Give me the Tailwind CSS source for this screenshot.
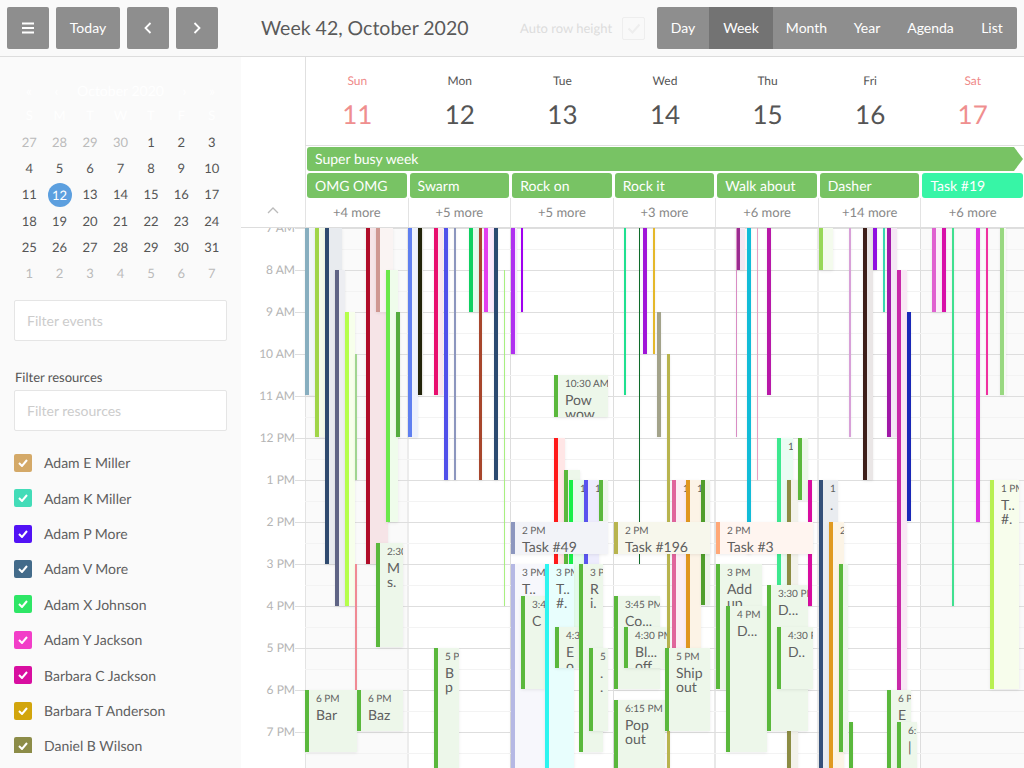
<!DOCTYPE html>
<html lang="en">
<head>
    <meta charset="UTF-8">
    <title>Week 42, October 2020</title>
    <script src="https://cdn.jsdelivr.net/npm/@tailwindcss/browser@4"></script>
</head>
<body class="w-[1024px] h-[768px] overflow-hidden bg-white font-['Lato',sans-serif] text-[#555] [text-rendering:geometricPrecision]">

<!-- toolbar -->
<header class="h-[57px] border-b border-[#ddd] bg-[#f9f9f9] flex items-center pl-[7px] pr-[7px]">
    <button class="w-[42px] h-[42px] shrink-0 rounded-[2px] bg-[#8e8e8e] flex items-center justify-center">
        <svg width="14" height="12" viewBox="0 0 14 12" stroke="#fff" stroke-width="2" fill="none"><path d="M1 1.5h12M1 6h12M1 10.5h12"/></svg>
    </button>
    <button class="ml-[7px] w-[64px] h-[42px] pb-[2px] shrink-0 rounded-[2px] bg-[#8e8e8e] text-white text-[14px]">Today</button>
    <button class="ml-[7px] w-[42px] h-[42px] shrink-0 rounded-[2px] bg-[#8e8e8e] flex items-center justify-center">
        <svg width="8" height="12" viewBox="0 0 8 12" stroke="#fff" stroke-width="1.8" fill="none"><path d="M6.5 1L1.5 6l5 5"/></svg>
    </button>
    <button class="ml-[7px] w-[42px] h-[42px] shrink-0 rounded-[2px] bg-[#8e8e8e] flex items-center justify-center">
        <svg width="8" height="12" viewBox="0 0 8 12" stroke="#fff" stroke-width="1.8" fill="none"><path d="M1.5 1l5 5-5 5"/></svg>
    </button>
    <h1 class="ml-[43px] w-[208px] pt-[1px] shrink-0 text-[19.5px] text-[#5a5a5a] whitespace-nowrap">Week 42, October 2020</h1>
    <span class="ml-[51px] w-[90px] pt-[1px] shrink-0 text-[13px] text-[#ddd] whitespace-nowrap">Auto row height</span>
    <span class="ml-[12px] w-[23px] h-[23px] shrink-0 rounded-[2px] border border-[#eee] flex items-center justify-center">
        <svg width="14" height="11" viewBox="0 0 14 11" stroke="#eee" stroke-width="2" fill="none"><path d="M1.5 5.5l4 4 7-8"/></svg>
    </span>
    <nav class="ml-auto h-[42px] w-[360px] shrink-0 rounded-[2px] bg-[#8e8e8e] flex text-white text-[14px]">
        <button class="w-[52px] pb-[2px]">Day</button>
        <button class="w-[64px] pb-[2px] bg-[#737373]">Week</button>
        <button class="w-[67px] pb-[2px]">Month</button>
        <button class="w-[54px] pb-[2px]">Year</button>
        <button class="w-[73px] pb-[2px]">Agenda</button>
        <button class="w-[50px] pb-[2px]">List</button>
    </nav>
</header>

<div class="flex h-[711px]">
    <!-- sidebar -->
    <div class="w-[241px] shrink-0 bg-[#fafafa]">
    <aside class="px-[14px] flex flex-col h-[696px] overflow-hidden">
        <div class="w-[213px] h-[32px] shrink-0 mt-[17px] flex items-center text-white text-[14px]">
            <span class="w-[30px] text-center">«</span>
            <span class="w-[25px] text-center">‹</span>
            <span class="flex-1 text-center">October 2020</span>
            <span class="w-[25px] text-center">›</span>
            <span class="w-[30px] text-center">»</span>
        </div>
        <div id="mini" class="grid grid-cols-7 w-[213px] shrink-0 text-[13px] auto-rows-[26.3px] items-center text-center mt-[-3px]"></div>
        <input placeholder="Filter events" class="mt-[13px] w-[213px] h-[41px] shrink-0 bg-white border border-[#e5e5e5] rounded-[2px] px-[12px] text-[14px] placeholder-[#ccc]">
        <label class="mt-[28px] ml-[1px] shrink-0 text-[13px] leading-[16px] text-[#555]">Filter resources</label>
        <input placeholder="Filter resources" class="mt-[5px] w-[213px] h-[41px] shrink-0 bg-white border border-[#e5e5e5] rounded-[2px] px-[12px] text-[14px] placeholder-[#ccc]">
        <ul id="resources" class="mt-[14px] shrink-0 flex flex-col text-[14px] text-[#5f5f5f]"></ul>
    </aside>
    </div>

    <main class="flex-1 min-w-0 flex flex-col">
        <!-- day header -->
        <div class="flex h-[89px] shrink-0">
            <div class="w-[64px] shrink-0"></div>
            <div class="flex-1 border-l border-b border-[#e0e0e0] grid grid-cols-7 text-center">
                <div class="pt-[16px]"><div class="text-[12px] leading-[16px] text-[#ef8a8a]">Sun</div><div class="text-[26px] leading-[32px] mt-[9px] text-[#ef8f8f]">11</div></div>
                <div class="pt-[16px]"><div class="text-[12px] leading-[16px]">Mon</div><div class="text-[26px] leading-[32px] mt-[9px]">12</div></div>
                <div class="pt-[16px]"><div class="text-[12px] leading-[16px]">Tue</div><div class="text-[26px] leading-[32px] mt-[9px]">13</div></div>
                <div class="pt-[16px]"><div class="text-[12px] leading-[16px]">Wed</div><div class="text-[26px] leading-[32px] mt-[9px]">14</div></div>
                <div class="pt-[16px]"><div class="text-[12px] leading-[16px]">Thu</div><div class="text-[26px] leading-[32px] mt-[9px]">15</div></div>
                <div class="pt-[16px]"><div class="text-[12px] leading-[16px]">Fri</div><div class="text-[26px] leading-[32px] mt-[9px]">16</div></div>
                <div class="pt-[16px]"><div class="text-[12px] leading-[16px] text-[#ef8a8a]">Sat</div><div class="text-[26px] leading-[32px] mt-[9px] text-[#ef8f8f]">17</div></div>
            </div>
        </div>

        <!-- all day rows -->
        <div class="flex h-[82px] border-b border-[#ddd] shrink-0">
            <div class="w-[64px] shrink-0 relative">
                <svg class="absolute left-[26px] top-[61px]" width="12" height="7" viewBox="0 0 12 7" stroke="#bbb" stroke-width="1.3" fill="none"><path d="M1 6l5-5 5 5"/></svg>
            </div>
            <div class="flex-1 border-l border-[#e3e3e3] flex flex-col">
                <div class="h-[25px] pt-[1px] pl-[1px]">
                    <div class="w-[716px] h-[24px] rounded-l-[3px] bg-[#78c364] text-white text-[14px] leading-[24px] pl-[8px] [clip-path:polygon(0_0,707px_0,100%_50%,707px_100%,0_100%)]">Super busy week</div>
                </div>
                <div class="grid grid-cols-7 h-[27px] pt-[2px]">
                    <div class="ml-[1px] mr-[2px] rounded-[3px] bg-[#78c364] text-white text-[14px] leading-[25px] pl-[8px]">OMG OMG</div>
                    <div class="ml-[1px] mr-[2px] rounded-[3px] bg-[#78c364] text-white text-[14px] leading-[25px] pl-[8px]">Swarm</div>
                    <div class="ml-[1px] mr-[2px] rounded-[3px] bg-[#78c364] text-white text-[14px] leading-[25px] pl-[8px]">Rock on</div>
                    <div class="ml-[1px] mr-[2px] rounded-[3px] bg-[#78c364] text-white text-[14px] leading-[25px] pl-[8px]">Rock it</div>
                    <div class="ml-[1px] mr-[2px] rounded-[3px] bg-[#78c364] text-white text-[14px] leading-[25px] pl-[8px]">Walk about</div>
                    <div class="ml-[1px] mr-[2px] rounded-[3px] bg-[#78c364] text-white text-[14px] leading-[25px] pl-[8px]">Dasher</div>
                    <div class="ml-[1px] mr-[1px] rounded-[3px] bg-[#37f5a6] text-white text-[14px] leading-[25px] pl-[8px]">Task #19</div>
                </div>
                <div class="grid grid-cols-7 flex-1 text-center text-[13px] leading-[29px] text-[#888]">
                    <div class="border-r border-[#e3e3e3]">+4 more</div>
                    <div class="border-r border-[#e3e3e3]">+5 more</div>
                    <div class="border-r border-[#e3e3e3]">+5 more</div>
                    <div class="border-r border-[#e3e3e3]">+3 more</div>
                    <div class="border-r border-[#e3e3e3]">+6 more</div>
                    <div class="border-r border-[#e3e3e3]">+14 more</div>
                    <div>+6 more</div>
                </div>
            </div>
        </div>

        <!-- time grid -->
        <div class="flex-1 min-h-0 relative overflow-hidden flex">
            <div id="labels" class="w-[64px] shrink-0 relative"></div>
            <div class="flex-1 grid grid-cols-7 border-l border-[#e3e3e3]">
                <div class="bg-[#fafafa] border-r-2 border-[#ececec]"></div>
                <div class="border-r border-[#ddd]"></div>
                <div class="border-r border-[#ddd]"></div>
                <div class="border-r-2 border-[#e8e8e8]"></div>
                <div class="border-r-2 border-[#ececec]"></div>
                <div class="border-r border-[#ddd]"></div>
                <div class="bg-[#fafafa]"></div>
            </div>
            <div id="lines" class="absolute inset-0"></div>
            <div id="events" class="absolute inset-0"></div>
        </div>
    </main>
</div>

<script>
    // mini calendar
    const mini = document.getElementById('mini');
    'SMTWTFS'.split('').forEach(d => {
        mini.insertAdjacentHTML('beforeend', `<div class="text-white">${d}</div>`);
    });
    const days = [27,28,29,30,1,2,3,4,5,6,7,8,9,10,11,12,13,14,15,16,17,18,19,20,21,22,23,24,25,26,27,28,29,30,31,1,2,3,4,5,6,7];
    days.forEach((d, i) => {
        const muted = i < 4 || i > 34;
        if (d === 12) {
            mini.insertAdjacentHTML('beforeend', `<div class="flex justify-center"><span class="w-[24px] h-[24px] rounded-full bg-[#5c9fdf] text-white leading-[24px]">12</span></div>`);
        } else {
            mini.insertAdjacentHTML('beforeend', `<div class="${muted ? 'text-[#bbb]' : 'text-[#555]'}">${d}</div>`);
        }
    });

    // resource filter list
    const resources = [
        ['Adam E Miller', '#d4a968'], ['Adam K Miller', '#43dcb8'], ['Adam P More', '#5212f5'],
        ['Adam V More', '#436b8a'], ['Adam X Johnson', '#2ee666'], ['Adam Y Jackson', '#f23ec8'],
        ['Barbara C Jackson', '#d80ea0'], ['Barbara T Anderson', '#d2a50c'], ['Daniel B Wilson', '#8c8c48']
    ];
    const list = document.getElementById('resources');
    resources.forEach(([name, color]) => {
        list.insertAdjacentHTML('beforeend', `<li class="h-[35.4px] shrink-0 flex items-center">
            <span class="w-[18px] h-[18px] rounded-[2px] flex items-center justify-center" style="background:${color}">
                <svg width="10" height="8" viewBox="0 0 10 8" stroke="#fff" stroke-width="2" fill="none"><path d="M1 4l3 3 5-6"/></svg>
            </span>
            <span class="ml-[12px] whitespace-nowrap">${name}</span>
        </li>`);
    });

    // hour lines and labels
    const hours = ['7 AM','8 AM','9 AM','10 AM','11 AM','12 PM','1 PM','2 PM','3 PM','4 PM','5 PM','6 PM','7 PM'];
    const labels = document.getElementById('labels');
    const lines = document.getElementById('lines');
    hours.forEach((h, i) => {
        labels.insertAdjacentHTML('beforeend', `<div class="absolute right-[10px] h-[16px] leading-[16px] text-[12px] text-[#b4b4b4] whitespace-nowrap" style="top:${i * 42 - 8}px">${h}</div>`);
        lines.insertAdjacentHTML('beforeend', `<div class="absolute left-[54px] right-0 h-px bg-[#dedede]" style="top:${i * 42}px"></div>`);
        lines.insertAdjacentHTML('beforeend', `<div class="absolute left-[64px] right-0 h-px bg-[#f3f3f3]" style="top:${i * 42 + 21}px"></div>`);
    });

    // events: page x, right edge, top y, bottom y, colour, bar width, time, label
    const G = '#5ab83c';
    const B = 768;
    const T = 228;
    const events = [
        [305,315,T,395,'#87aebf',4], [315,325,T,437,'#a0d548',4], [325,342,T,564,'#2f4a6f',4],
        [335,345,270,606,'#5f6485',4], [345,355,312,606,'#b5ff4c',4], [355,357,354,480,'#a0d590',2],
        [366,388,T,564,'#b00c28',4], [376,393,T,312,'#cf9791',4], [386,398,270,522,'#6be84a',4],
        [396,400,312,437,'#55ab3f',4], [355,357,564,690,'#f08a94',2],
        [376,403,543,647,G,4,'2:30 PM','M<br>s.'],
        [305,357,690,752,G,4,'6 PM','Bar'], [357,403,690,731,G,4,'6 PM','Baz'],

        [408,418,T,437,'#5f7ff0',4], [418,423,T,395,'#23240a',4], [434,443,T,395,'#e80f6e',4],
        [444,449,T,480,'#5050ea',4], [454,456,T,480,'#8c96be',2], [469,479,T,312,'#0ed060',4],
        [479,482,T,480,'#a8462c',3], [484,494,T,312,'#e33df0',4], [494,498,T,480,'#2b4a70',4],
        [504,505,270,606,'#a8f080',1], [434,459,648,B,G,4,'5 PM','B<br>p'],

        [511,517,T,354,'#b030f0',4], [521,523,T,312,'#a000f0',2],
        [554,608,375,417,G,4,'10:30 AM','Pow<br>wow'],
        [554,565,438,564,'#ff1a1a',4], [564,580,470,564,G,4], [569,584,480,627,'#17f048',4,'1'],
        [584,599,480,564,'#5a55ee',4,'1'], [599,608,480,521,G,4],
        [511,608,522,554,'#8c96be',4,'2 PM','Task #49'],
        [511,545,564,B,'#b5b8e4',4,'3 PM','T..<br>k'],
        [521,545,596,689,G,4,'3:45 PM','C'],
        [545,574,564,B,'#2df5f0',4,'3 PM','T..<br>#.'],
        [555,579,627,668,G,4,'4:30 PM','E<br>o'],
        [579,603,564,752,G,4,'3 PM','R<br>i.'],
        [589,608,648,731,G,4,'5 PM','.<br>.'],

        [624,626,T,395,'#20e090',2], [639,640,T,564,'#0f6b2a',1], [643,647,T,354,'#a015d8',4],
        [653,655,T,354,'#e5b82a',2], [657,661,312,437,'#a3a38a',4], [667,670,354,B,'#b8b44e',3],
        [672,686,480,648,'#e0659c',4,'1'], [686,701,480,648,'#e09620',4,'1'], [701,710,480,605,'#4f9e2c',4],
        [614,710,522,554,'#b8b44e',4,'2 PM','Task #196'],
        [614,660,596,689,G,4,'3:45 PM','Co...'],
        [624,667,627,668,G,4,'4:30 PM','Bl...<br>off'],
        [614,665,700,B,G,4,'6:15 PM','Pop<br>out'],
        [665,710,648,731,G,4,'5 PM','Ship<br>out'],

        [736,745,T,270,'#9c2d92',4], [736,737,T,437,'#d98cc4',1], [747,751,T,554,'#12bcd8',4],
        [757,758,T,480,'#e8a0c4',1], [767,771,T,395,'#b818a8',4],
        [777,793,438,585,'#3de88f',4,'1'], [787,798,480,B,'#8c8c44',4], [798,808,438,500,G,4],
        [808,812,480,606,'#d80ca0',4],
        [716,813,522,554,'#ffa878',4,'2 PM','Task #3'],
        [716,762,564,689,G,4,'3 PM','Add<br>up'],
        [726,767,606,752,G,4,'4 PM','D...'],
        [767,808,585,731,G,4,'3:30 PM','D...'],
        [777,813,627,689,G,4,'4:30 PM','D..'],

        [819,833,T,270,'#98d858',4], [849,851,T,437,'#d8a0d8',2], [863,873,T,480,'#3e1f1a',4],
        [873,877,T,270,'#9010e0',4], [883,885,T,312,'#38d8b0',2], [887,897,T,437,'#a018a8',4],
        [897,907,270,690,'#c828a8',4], [907,911,312,521,'#1a28b8',4],
        [819,838,480,B,'#34507a',4,'1','.'], [829,844,522,B,'#e09a20',4,'2'],
        [839,848,564,752,G,4], [849,853,722,B,G,4],
        [887,911,690,B,G,4,'6 PM','E'], [897,917,722,B,G,4,'6:15','|'],

        [932,942,T,312,'#e060d0',4], [942,946,T,312,'#d810a8',4], [952,954,T,606,'#40e090',2],
        [976,980,T,522,'#e030e0',4], [986,988,T,395,'#f030a0',2], [1000,1006,T,395,'#98d880',4],
        [990,1019,480,689,'#b8f050',4,'1 PM','T..<br>#.']
    ];

    function tint(hex) {
        const v = [1, 3, 5].map(i => parseInt(hex.slice(i, i + 2), 16));
        return `rgb(${v.map(c => Math.round(255 - (255 - c) * 0.11)).join(',')})`;
    }

    const holder = document.getElementById('events');
    events.forEach(([x, right, top, bottom, color, bar, time, label]) => {
        let text = '';
        if (time) text += `<div class="pl-[7px] text-[10px] leading-[14px] pt-[2px] whitespace-nowrap">${time}</div>`;
        if (label) text += `<div class="pl-[7px] text-[14px] leading-[14px] mt-[2px]">${label}</div>`;
        holder.insertAdjacentHTML('beforeend', `<div class="absolute overflow-hidden shadow-[0_1px_3px_rgba(0,0,0,0.08)] text-[#5f5f5f]" style="left:${x - 241}px;top:${top - 228}px;width:${right - x}px;height:${bottom - top}px;background:${tint(color)};border-left:${bar}px solid ${color}">${text}</div>`);
    });
</script>
</body>
</html>
